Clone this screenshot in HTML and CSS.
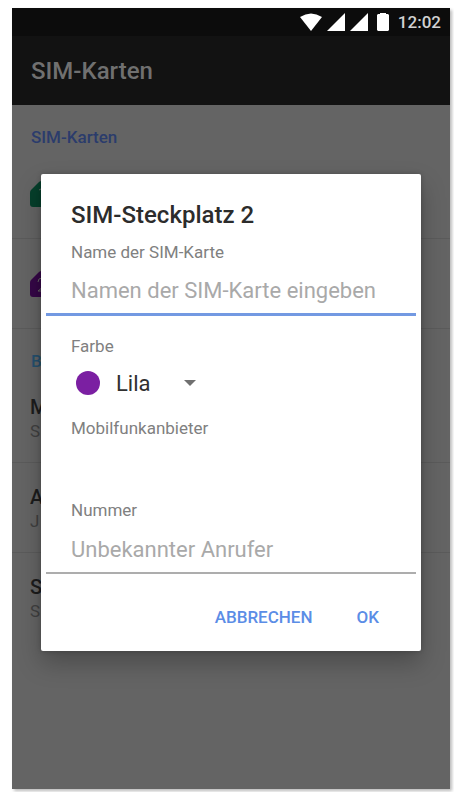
FILE: index.html
```html
<!DOCTYPE html>
<html lang="de">
<head>
<meta charset="utf-8">
<meta name="viewport" content="width=device-width, initial-scale=1">
<title>SIM-Karten</title>
<link rel="stylesheet" href="styles.css">
</head>
<body>
<div class="screen">
  <div class="status">
    <svg width="22" height="18" viewBox="0 0 22 18"><path d="M0 4Q11-3 22 4L11 18Z"/></svg>
    <svg width="18" height="18" viewBox="0 0 18 18"><path d="M18 0V18H0Z"/></svg>
    <svg width="18" height="18" viewBox="0 0 18 18"><path d="M18 0V18H0Z"/></svg>
    <svg class="battery" width="12" height="18" viewBox="0 0 12 18"><path d="M3 0H9V1H11L12 2V17L11 18H1L0 17V2L1 1H3Z"/></svg>
    <span class="clock">12:02</span>
  </div>
  <header class="toolbar"><h1>SIM-Karten</h1></header>
  <main>
    <h2 class="section">SIM-Karten</h2>
    <ul class="list">
      <li><svg class="sim green" width="24" height="26" viewBox="0 0 24 26"><path class="card" d="M9 1Q10 0 12 0H22Q24 0 24 2V24Q24 26 22 26H3Q0 26 0 23V12Q0 10 1 9Z"/><path class="digit" d="M9 9L13 7V20"/></svg></li>
      <li><svg class="sim purple" width="24" height="26" viewBox="0 0 24 26"><path class="card" d="M9 1Q10 0 12 0H22Q24 0 24 2V24Q24 26 22 26H3Q0 26 0 23V12Q0 10 1 9Z"/><path class="digit" d="M8 11Q8 7 12 7T16 11Q16 14 8 20H16"/></svg></li>
    </ul>
    <h2 class="section light">B</h2>
    <ul class="list">
      <li><span class="name">M</span><span class="info">S</span></li>
      <li><span class="name">A</span><span class="info">J</span></li>
      <li><span class="name">S</span><span class="info">S</span></li>
    </ul>
  </main>
  <div class="overlay">
    <form class="dialog" role="dialog" aria-labelledby="dialog-title">
      <h2 class="title" id="dialog-title">SIM-Steckplatz 2</h2>
      <label class="label" for="sim-name">Name der SIM-Karte</label>
      <input class="field active" id="sim-name" type="text" placeholder="Namen der SIM-Karte eingeben">
      <label class="label color-label" for="color">Farbe</label>
      <div class="color">
        <span class="swatch"></span>
        <select id="color"><option>Lila</option></select>
        <svg class="caret" width="12" height="6" viewBox="0 0 12 6"><path d="M0 0H12L6 6Z"/></svg>
      </div>
      <div class="label carrier">Mobilfunkanbieter</div>
      <label class="label" for="number">Nummer</label>
      <input class="field" id="number" type="tel" placeholder="Unbekannter Anrufer">
      <div class="actions">
        <button type="button">ABBRECHEN</button>
        <button type="button">OK</button>
      </div>
    </form>
  </div>
</div>
</body>
</html>
```
FILE: styles.css
```css
* { box-sizing: border-box; }

body {
  margin: 0;
  padding: 8px 4px 3px 12px;
  background: #fff;
  font-family: Roboto, "Liberation Sans", sans-serif;
}

h1, h2, ul { margin: 0; padding: 0; }

.screen {
  position: relative;
  min-height: calc(100vh - 11px);
  background: #646464;
  box-shadow: 2px 2px 3px #bbb;
}

.status {
  display: flex;
  align-items: center;
  justify-content: flex-end;
  gap: 5px;
  height: 28px;
  padding: 0 9px;
  background: #0c0c0c;
  fill: #fff;
}

.battery { margin: 0 4px; }

.clock {
  color: #d2d2d2;
  font-size: 17px;
  font-weight: 500;
}

.toolbar {
  display: flex;
  align-items: center;
  height: 69px;
  padding: 0 19px;
  background: #121212;
}

.toolbar h1 {
  color: #707070;
  font-size: 24px;
  font-weight: 500;
}

.section {
  padding: 20px 19px 0;
  color: #2b3c6c;
  font-size: 17px;
  font-weight: 500;
  line-height: 24px;
}

.section.light { color: #24506e; }

.list { list-style: none; }

.list li {
  display: flex;
  flex-direction: column;
  justify-content: center;
  height: 90px;
  padding: 0 18px;
  border-bottom: 1px solid #5b5b5b;
}

.list:last-child li:last-child { border-bottom: 0; }

.sim .digit { fill: none; stroke: #646464; stroke-width: 1; }
.green .card { fill: #063f2b; }
.purple .card { fill: #350747; }

.name {
  color: #1c1c1c;
  font-size: 20px;
  font-weight: 500;
  line-height: 26px;
}

.info {
  color: #404040;
  font-size: 17px;
  line-height: 22px;
}

.overlay {
  position: absolute;
  inset: 28px 0 0;
  display: flex;
  align-items: center;
  padding: 0 29px;
}

.dialog {
  flex: 1;
  display: flex;
  flex-direction: column;
  min-width: 0;
  padding: 24px 5px 9px;
  border-radius: 2px;
  background: #fff;
  box-shadow: 0 12px 24px rgba(0, 0, 0, 0.25), 0 0 5px rgba(0, 0, 0, 0.2);
}

.title {
  margin-bottom: 8px;
  padding: 0 25px;
  color: #2c2c2c;
  font-size: 24px;
  font-weight: 500;
  line-height: 34px;
}

.label {
  padding: 0 25px;
  color: #808080;
  font-size: 17px;
  line-height: 24px;
}

.field {
  width: 100%;
  height: 52px;
  padding: 4px 25px 0;
  border: 0;
  border-bottom: 2px solid #adadad;
  outline: 0;
  background: none;
  color: #2c2c2c;
  font: 22px Roboto, "Liberation Sans", sans-serif;
}

.field::placeholder { color: #a9a9a9; opacity: 1; }
.field.active { border-bottom: 3px solid #7399e2; }

.color-label { margin-top: 18px; }

.color {
  display: flex;
  align-items: center;
  height: 50px;
  padding: 0 30px;
}

.swatch {
  width: 24px;
  height: 24px;
  border-radius: 50%;
  background: #7b1fa2;
}

.color select {
  width: 80px;
  margin-right: -12px;
  margin-left: 16px;
  padding: 0;
  border: 0;
  appearance: none;
  background: none;
  color: #303030;
  font: 22px Roboto, "Liberation Sans", sans-serif;
}

.caret { fill: #707070; pointer-events: none; }

.carrier { margin: 8px 0 58px; }

.actions {
  display: flex;
  justify-content: flex-end;
  gap: 24px;
  margin-top: 18px;
  padding: 0 27px;
}

.actions button {
  height: 50px;
  padding: 0 10px;
  border: 0;
  background: none;
  color: #5b8de6;
  font: 500 17px Roboto, "Liberation Sans", sans-serif;
}
```
